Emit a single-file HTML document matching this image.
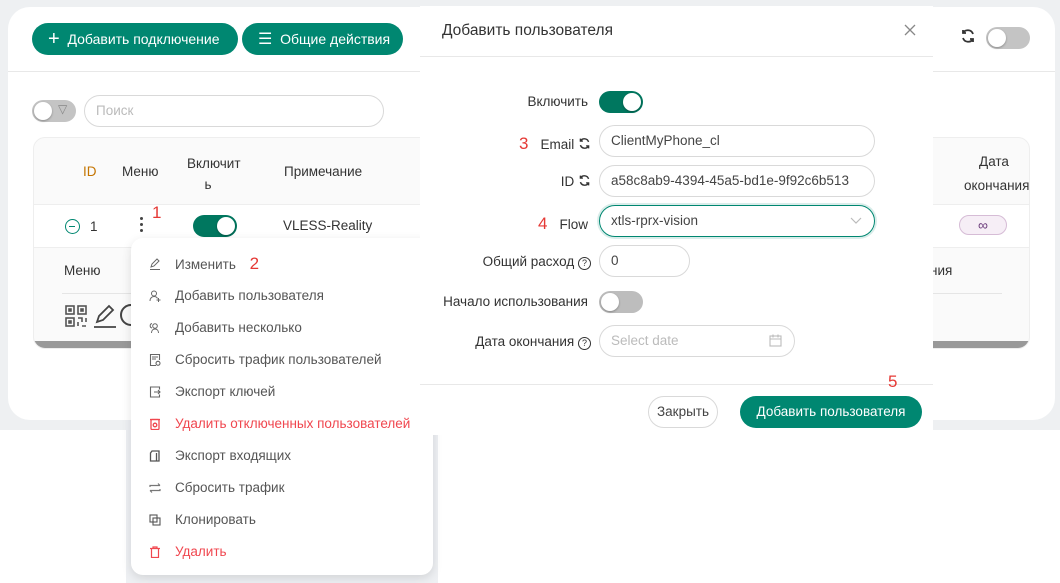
<!DOCTYPE html>
<html><head><meta charset="utf-8"><style>
*{box-sizing:border-box;margin:0;padding:0}
body{width:1060px;height:583px;position:relative;overflow:hidden;background:#fff;font-family:"Liberation Sans",sans-serif;font-size:13px;color:#333}
.a{position:absolute}
.btn{position:absolute;height:32px;border-radius:16px;background:#008771;color:#fff;font-size:14px;line-height:32px}
.red{color:#e53935;font-size:17px}
.tg{position:absolute;width:44px;height:22px;border-radius:11px}
.tg::after{content:"";position:absolute;top:2px;width:18px;height:18px;border-radius:50%;background:#fff;box-shadow:0 1px 2px rgba(0,0,0,.3)}
.on{background:#00775f}.on::after{right:2px}
.off{background:#bdbdbd}.off::after{left:2px}
.inp{position:absolute;height:32px;border:1px solid #d9d9d9;border-radius:16px;padding-left:11px;line-height:30px;font-size:13.5px;color:#444}
.lbl{position:absolute;right:0;text-align:right;font-size:13.5px;color:#333;white-space:nowrap}
.mi{position:absolute;left:0;height:32px;line-height:32px;font-size:13.5px;color:#555;padding-left:44px;width:300px;white-space:nowrap}
.mi.r{color:#f0474f}
.mi svg{position:absolute;left:18px;top:10px}
.q{display:inline-block;width:13px;height:13px;border:1.3px solid #333;border-radius:50%;font-size:9px;line-height:11px;text-align:center;vertical-align:0}
</style></head><body>
<div class="a" style="left:0;top:0;width:1060px;height:430px;background:#eef0f2"></div>
<div class="a" style="left:126px;top:380px;width:312px;height:203px;background:#eef0f3"></div>
<div class="a" style="left:8px;top:7px;width:1047px;height:413px;background:#fff;border-radius:22px"></div>
<div class="a" style="left:8px;top:71px;width:1047px;height:1px;background:#e8e8e8"></div>
<div class="btn" style="left:32px;top:23px;width:206px;padding-left:16px"><span style="font-size:20px;vertical-align:-1px">+</span>&nbsp; Добавить подключение</div>
<div class="btn" style="left:242px;top:23px;width:161px;padding-left:16px"><span style="font-size:16px">☰</span>&nbsp; Общие действия</div>
<div class="tg off" style="left:32px;top:100px;width:44px;background:#c4c4c4"></div>
<div class="a" style="left:58px;top:102px;font-size:12px;color:#888">▽</div>
<div class="inp" style="left:84px;top:95px;width:300px;color:#bbb">Поиск</div>
<div class="a" style="left:33px;top:137px;width:997px;height:212px;border:1px solid #eee;border-radius:12px;background:#fafafa;overflow:hidden">
 <div class="a" style="left:0;top:66px;width:997px;height:44px;background:#fff;border-top:1px solid #eee;border-bottom:1px solid #eee"></div>
 <div class="a" style="left:0;bottom:0;width:997px;height:7px;background:#999"></div>
</div>
<div class="a" style="left:83px;top:164px;color:#c47400;font-size:13.5px">ID</div>
<div class="a" style="left:122px;top:164px;font-size:13.5px">Меню</div>
<div class="a" style="left:187px;top:153px;font-size:13.5px;line-height:21px;text-align:center;width:42px">Включит<br>ь</div>
<div class="a" style="left:284px;top:164px;font-size:13.5px">Примечание</div>
<div class="a" style="left:65px;top:219px;width:15px;height:15px;border:1.5px solid #008771;border-radius:50%"><div class="a" style="left:3px;top:5.5px;width:6px;height:1.5px;background:#008771"></div></div>
<div class="a" style="left:90px;top:219px;font-size:13.5px">1</div>
<div class="a" style="left:140px;top:217px;width:3px;height:3px;background:#444;border-radius:50%;box-shadow:0 6px 0 #444,0 12px 0 #444"></div>
<div class="a red" style="left:152px;top:203px">1</div>
<div class="tg on" style="left:193px;top:215px"></div>
<div class="a" style="left:283px;top:218px;font-size:13.5px">VLESS-Reality</div>
<div class="a" style="left:64px;top:263px;font-size:13.5px">Меню</div>
<div class="a" style="left:62px;top:293px;width:100px;height:1px;background:#e5e5e5"></div>
<svg class="a" style="left:65px;top:305px" width="22" height="22" viewBox="0 0 22 22" fill="none" stroke="#555" stroke-width="1.6"><rect x="1" y="1" width="8" height="8"/><rect x="13" y="1" width="8" height="8"/><rect x="1" y="13" width="8" height="8"/><rect x="4" y="4" width="2" height="2" fill="#555"/><rect x="16" y="4" width="2" height="2" fill="#555"/><rect x="4" y="16" width="2" height="2" fill="#555"/><path d="M13 13h4v4M21 13v4M13 17v4M17 21h4"/></svg>
<svg class="a" style="left:93px;top:304px" width="24" height="24" viewBox="0 0 24 24" fill="none" stroke="#444" stroke-width="1.8"><path d="M4 18l2-6 10-10 4 4-10 10z"/><path d="M1 23h22"/></svg>
<div class="a" style="left:120px;top:304px;width:22px;height:22px;border:2px solid #444;border-radius:50%"></div>
<!-- right side -->
<svg class="a" style="left:960px;top:28px" width="16" height="16" viewBox="0 0 16 16" fill="none" stroke="#333" stroke-width="1.8"><path d="M13 6A5.5 5.5 0 0 0 3 5M3 10a5.5 5.5 0 0 0 10 1"/><path d="M3 2v3h3M13 14v-3h-3"/></svg>
<div class="tg off" style="left:986px;top:27px;background:#c4c4c4"></div>
<div class="a" style="left:964px;top:150px;font-size:13.5px;line-height:24px;text-align:center;width:60px">Дата<br>окончания</div>
<div class="a" style="left:959px;top:215px;width:48px;height:20px;border:1px solid #d6bcd6;background:#f6eef6;border-radius:10px;text-align:center;line-height:18px;font-size:14px;color:#6a3a7a">∞</div>
<div class="a" style="left:930px;top:263px;font-size:13.5px">ния</div>
<div class="a" style="left:930px;top:293px;width:72px;height:1px;background:#e5e5e5"></div>
<!-- menu -->
<div class="a" style="left:131px;top:238px;width:302px;height:337px;background:#fff;border-radius:12px;box-shadow:0 3px 10px rgba(0,0,0,.12)">
 <div class="mi" style="top:10px"><svg width="12" height="12" viewBox="0 0 12 12" fill="none" stroke="#666" stroke-width="1"><path d="M2 9l1-3 5-5 2 2-5 5z M1 11.5h10"/></svg>Изменить <span class="red" style="margin-left:10px">2</span></div>
 <div class="mi" style="top:42px"><svg width="12" height="12" viewBox="0 0 12 12" fill="none" stroke="#666" stroke-width="1"><circle cx="5" cy="3.5" r="2.5"/><path d="M1 11c0-3 2-4.5 4-4.5s3 .8 3.5 2M9.5 8v4M7.5 10h4"/></svg>Добавить пользователя</div>
 <div class="mi" style="top:74px"><svg width="12" height="12" viewBox="0 0 12 12" fill="none" stroke="#666" stroke-width="1"><circle cx="6" cy="4" r="2.3"/><path d="M2.5 11c0-2.5 1.5-4 3.5-4s3.5 1.5 3.5 4M3 1.5a2.3 2.3 0 0 0 0 4.5"/></svg>Добавить несколько</div>
 <div class="mi" style="top:106px"><svg width="12" height="12" viewBox="0 0 12 12" fill="none" stroke="#666" stroke-width="1.1"><path d="M7 11.5H1.5v-11h9V6"/><path d="M3 3h6M3 5h4"/><circle cx="9" cy="9.3" r="2"/></svg>Сбросить трафик пользователей</div>
 <div class="mi" style="top:138px"><svg width="12" height="12" viewBox="0 0 12 12" fill="none" stroke="#666" stroke-width="1.1"><path d="M10.5 3.5V1h-9v10h9V8.5M5 6h6M9 4l2 2-2 2"/></svg>Экспорт ключей</div>
 <div class="mi r" style="top:170px"><svg width="12" height="12" viewBox="0 0 12 12" fill="none" stroke="#f0474f" stroke-width="1.3"><rect x="2" y="1.5" width="8" height="10" rx="1"/><circle cx="6" cy="7" r="1.8"/><path d="M1 1.5h10"/></svg>Удалить отключенных пользователей</div>
 <div class="mi" style="top:202px"><svg width="12" height="12" viewBox="0 0 12 12" fill="none" stroke="#555" stroke-width="1.3"><path d="M3 1h7v10H1.5V3z"/><path d="M7.5 3v8"/></svg>Экспорт входящих</div>
 <div class="mi" style="top:234px"><svg width="12" height="12" viewBox="0 0 12 12" fill="none" stroke="#777" stroke-width="1.2"><path d="M1 5V3.5h10M9 1.5l2 2M11 7v1.5H1M3 10.5l-2-2"/></svg>Сбросить трафик</div>
 <div class="mi" style="top:266px"><svg width="12" height="12" viewBox="0 0 12 12" fill="none" stroke="#555" stroke-width="1.1"><rect x="1" y="1" width="7" height="7"/><rect x="4" y="4" width="7" height="7"/></svg>Клонировать</div>
 <div class="mi r" style="top:298px"><svg width="12" height="12" viewBox="0 0 12 12" fill="none" stroke="#f0474f" stroke-width="1.2"><path d="M1 2.5h10M4 2.5V1h4v1.5M2.5 2.5v9h7v-9"/></svg>Удалить</div>
</div>
<!-- modal -->
<div class="a" style="left:420px;top:6px;width:513px;height:429px;background:#fff">
 <div class="a" style="left:22px;top:16px;font-size:15.5px;color:#333">Добавить пользователя</div>
 <svg class="a" style="left:484px;top:18px" width="12" height="12" viewBox="0 0 12 12" stroke="#888" stroke-width="1.3"><path d="M1 1l10 10M11 1L1 11"/></svg>
 <div class="a" style="left:0;top:50px;width:513px;height:1px;background:#e8e8e8"></div>
 <div class="a" style="left:0;top:0;width:171px;height:400px">
  <div class="lbl" style="top:88px;right:3px">Включить</div>
  <div class="lbl" style="top:128px"><span class="red" style="margin-right:12px">3</span>Email <svg width="13" height="13" viewBox="0 0 16 16" fill="none" stroke="#333" stroke-width="1.8" style="vertical-align:-1px"><path d="M13 6A5.5 5.5 0 0 0 3 5M3 10a5.5 5.5 0 0 0 10 1"/><path d="M3 2v3h3M13 14v-3h-3"/></svg></div>
  <div class="lbl" style="top:168px">ID <svg width="13" height="13" viewBox="0 0 16 16" fill="none" stroke="#333" stroke-width="1.8" style="vertical-align:-1px"><path d="M13 6A5.5 5.5 0 0 0 3 5M3 10a5.5 5.5 0 0 0 10 1"/><path d="M3 2v3h3M13 14v-3h-3"/></svg></div>
  <div class="lbl" style="top:208px;right:3px"><span class="red" style="margin-right:12px">4</span>Flow</div>
  <div class="lbl" style="top:248px">Общий расход <span class="q">?</span></div>
  <div class="lbl" style="top:288px;right:3px">Начало использования</div>
  <div class="lbl" style="top:328px">Дата окончания <span class="q">?</span></div>
 </div>
 <div class="tg on" style="left:179px;top:85px;width:44px"></div>
 <div class="inp" style="left:179px;top:119px;width:276px">ClientMyPhone_cl</div>
 <div class="inp" style="left:179px;top:159px;width:276px">a58c8ab9-4394-45a5-bd1e-9f92c6b513</div>
 <div class="inp" style="left:179px;top:199px;width:276px;border-color:#008771;box-shadow:0 0 0 2px rgba(0,135,113,.15)">xtls-rprx-vision<svg style="position:absolute;right:12px;top:11px" width="12" height="8" viewBox="0 0 12 8" fill="none" stroke="#bbb" stroke-width="1.2"><path d="M1 1l5 5 5-5"/></svg></div>
 <div class="inp" style="left:179px;top:239px;width:91px">0</div>
 <div class="tg off" style="left:179px;top:285px"></div>
 <div class="inp" style="left:179px;top:319px;width:196px;color:#bbb">Select date<svg style="position:absolute;right:12px;top:8px" width="13" height="13" viewBox="0 0 13 13" fill="none" stroke="#bbb" stroke-width="1.1"><rect x="1" y="2" width="11" height="10"/><path d="M1 5h11M4 0.5v3M9 0.5v3"/></svg></div>
 <div class="a" style="left:0;top:378px;width:513px;height:1px;background:#e8e8e8"></div>
 <div class="a red" style="left:468px;top:366px">5</div>
 <div class="a" style="left:228px;top:390px;width:70px;height:32px;border:1px solid #d9d9d9;border-radius:16px;text-align:center;line-height:30px;font-size:13.5px;color:#444">Закрыть</div>
 <div class="btn" style="left:320px;top:390px;width:182px;text-align:center;font-size:13.5px">Добавить пользователя</div>
</div>
</body></html>
